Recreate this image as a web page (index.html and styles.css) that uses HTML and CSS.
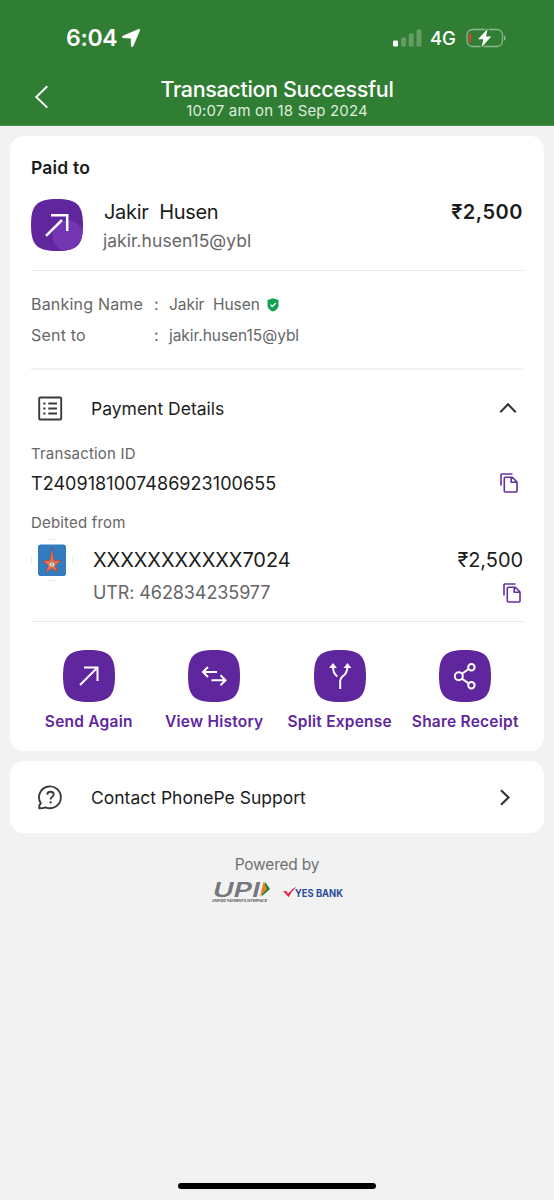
FILE: index.html
```
<!DOCTYPE html>
<html lang="en">
<head>
    <meta charset="UTF-8">
    <meta name="viewport" content="width=device-width, initial-scale=1">
    <title>Transaction Successful</title>
    <link rel="stylesheet" href="styles.css">
</head>
<body>
<svg width="0" height="0" class="defs">
    <symbol id="copy" viewBox="0 0 18 20">
        <path d="M1 12.5V1.8Q1 1 1.8 1H12.5M12.3 4.2H5.2Q4.3 4.2 4.3 5.1V18.1Q4.3 19 5.2 19H16.1Q17 19 17 18.1V9ZM11.2 4.5V9.2H16.8" fill="none" stroke="currentColor" stroke-width="1.6" stroke-linejoin="round"/>
    </symbol>
</svg>
<header class="header">
    <div class="status-bar">
        <span class="time">6:04</span>
        <svg class="location" width="18" height="18" viewBox="0 0 18 18"><path d="M16.6.4Q18 0 17.6 1.4L11 17Q10 18.600 9.400 17L9.200 9.700Q9.100 9 8.300 9L1 8.700Q-.600 8 1 7.100Z" fill="#fff" stroke="#fff" stroke-width=".8"/></svg>
        <svg class="signal" width="29" height="18" viewBox="0 0 29 18" fill="#fff"><rect y="11.500" width="5" height="6" rx="1.300"/><g opacity=".25"><rect x="8" y="8.500" width="5" height="9" rx="1.300"/><rect x="15.700" y="4.500" width="5" height="13" rx="1.300"/><rect x="23.500" y=".5" width="5" height="17" rx="1.300"/></g></svg>
        <span class="network">4G</span>
        <svg class="battery" width="40" height="20" viewBox="0 0 40 20">
            <rect x="1" y="1.500" width="35.500" height="17" rx="5.500" fill="none" stroke="#8bb98d" stroke-width="1.300"/>
            <path d="M38 7.300Q39.700 8 39.700 10T38 12.700Z" fill="#8bb98d"/>
            <rect x="3" y="5.500" width="2.300" height="9" rx="1" fill="#e5402f"/>
            <path d="M21.700.8 12 11.300H17.300L15.500 19.300 25.300 8.500H20Z" fill="#fff" stroke="#307e33" stroke-width="2" paint-order="stroke" stroke-linejoin="round"/>
        </svg>
    </div>
    <div class="title-bar">
        <svg class="back" width="16" height="24" viewBox="0 0 16 24"><path d="M14.300 1.200 3.200 12 14.300 22.600" fill="none" stroke="#fff" stroke-width="1.900"/></svg>
        <div class="titles">
            <h1>Transaction Successful</h1>
            <p>10:07 am on 18 Sep 2024</p>
        </div>
    </div>
</header>

<main>
    <section class="card receipt">
        <h2>Paid to</h2>
        <div class="payee">
            <svg width="52" height="52" viewBox="0 0 52 52">
                <clipPath id="tile"><path d="M26 0C46 0 52 6 52 26S46 52 26 52 0 46 0 26 6 0 26 0Z"/></clipPath>
                <g clip-path="url(#tile)"><rect width="52" height="52" fill="#60269e"/><circle cx="37" cy="37" r="15.500" fill="#7435b2"/></g>
                <path d="M20 16.300H36.200V32" fill="none" stroke="#fff" stroke-width="2.500"/>
                <path d="M15 36.800 31 21" stroke="#fff" stroke-width="2.500"/>
            </svg>
            <div class="payee-info">
                <span class="name">Jakir&nbsp; Husen</span>
                <span class="vpa">jakir.husen15@ybl</span>
            </div>
            <strong class="amount">₹2,500</strong>
        </div>
        <div class="banking">
            <div class="banking-row"><span class="key">Banking Name</span><span class="colon">:</span><span class="value">Jakir&nbsp; Husen</span>
                <svg class="verified" width="12" height="14" viewBox="0 0 12 14"><path d="M6 .3 11.500 2V7.500Q11.200 11.500 6 13.600Q.8 11.500.5 7.500V2Z" fill="#12a150"/><path d="M3.500 6.800 5.300 8.500 8.700 5" fill="none" stroke="#fff" stroke-width="1.300"/></svg>
            </div>
            <div class="banking-row"><span class="key">Sent to</span><span class="colon">:</span><span class="value">jakir.husen15@ybl</span></div>
        </div>
        <div class="details-head">
            <svg class="row-icon" width="25" height="25" viewBox="0 0 25 25" fill="none" stroke="#3a3a3a" stroke-width="1.900"><rect x="1.200" y="1.500" width="22" height="22" rx="1"/><path d="M5.300 7.500H7.500M10.300 7.500H19M5.300 12.500H7.500M10.300 12.500H19M5.300 17.500H7.500M10.300 17.500H19"/></svg>
            <span class="details-title">Payment Details</span>
            <svg width="18" height="12" viewBox="0 0 18 12"><path d="M1.300 10.200 9 2.300 16.700 10.200" fill="none" stroke="#333" stroke-width="2"/></svg>
        </div>
        <div class="label">Transaction ID</div>
        <div class="txn">
            <span>T2409181007486923100655</span>
            <svg class="copy" width="18" height="20"><use href="#copy"/></svg>
        </div>
        <div class="label debited">Debited from</div>
        <div class="account">
            <svg class="bank" width="42" height="42" viewBox="0 0 42 42">
                <g fill="none" stroke="#e6e6e6" stroke-width=".9"><path d="M17 .8Q21 .2 25 .8M17 41.200Q21 41.800 25 41.200M.8 17Q.2 21 .8 25M41.200 17Q41.800 21 41.200 25"/></g>
                <rect x="7" y="5.500" width="28" height="31.500" rx="2.800" fill="#347cc0"/>
                <path d="M20.900 8 23 21.300 30.700 21.500 24.300 26.400 27 34 20.700 29.500 14.600 34 17 26.400 11.200 21.500 18.800 21.300Z" fill="#ef6b42" stroke="#69496d" stroke-width=".6"/>
                <circle cx="20.900" cy="25.500" r="2.600" fill="#f5eee3" stroke="#666" stroke-width=".5"/><path d="M20.900 24V27" stroke="#444" stroke-width=".8"/>
            </svg>
            <div class="account-info">
                <div class="line"><span class="number">XXXXXXXXXXX7024</span><span class="debit">₹2,500</span></div>
                <div class="line"><span class="utr">UTR: 462834235977</span><svg class="copy" width="18" height="20"><use href="#copy"/></svg></div>
            </div>
        </div>
        <div class="actions">
            <div class="action">
                <svg width="52" height="52" viewBox="0 0 52 52"><path class="tile" d="M26 0C46 0 52 6 52 26S46 52 26 52 0 46 0 26 6 0 26 0Z"/><path class="stroke" d="M21 17.500H34.500V31M34.500 17.500 17 35"/></svg>
                <span>Send Again</span>
            </div>
            <div class="action">
                <svg width="52" height="52" viewBox="0 0 52 52"><path class="tile" d="M26 0C46 0 52 6 52 26S46 52 26 52 0 46 0 26 6 0 26 0Z"/><path class="stroke" d="M29 22H15.500M20 17 15 22 20 27M23.500 30.200H37M32.500 25.200 37.500 30.200 32.500 35.200"/></svg>
                <span>View History</span>
            </div>
            <div class="action">
                <svg width="52" height="52" viewBox="0 0 52 52"><path class="tile" d="M26 0C46 0 52 6 52 26S46 52 26 52 0 46 0 26 6 0 26 0Z"/><path class="stroke" d="M26.200 39V31Q26.200 28.500 28.500 26.500 33.300 23.500 33.500 16.500M19 16.500Q19 23.500 23.300 26.500"/><path fill="#fff" d="M15.100 17.900 19 13 22.900 17.900ZM29.600 17.900 33.500 13 37.400 17.900Z"/></svg>
                <span>Split Expense</span>
            </div>
            <div class="action">
                <svg width="52" height="52" viewBox="0 0 52 52"><path class="tile" d="M26 0C46 0 52 6 52 26S46 52 26 52 0 46 0 26 6 0 26 0Z"/><g class="stroke"><circle cx="19.800" cy="26.200" r="4"/><circle cx="32.400" cy="17.200" r="3.200"/><circle cx="32.400" cy="35.200" r="3.200"/><path d="M23 23.700 29.700 19M23 28.700 29.700 33.400"/></g></svg>
                <span>Share Receipt</span>
            </div>
        </div>
    </section>

    <section class="card support">
        <svg class="row-icon" width="25" height="25" viewBox="0 0 25 25" fill="none" stroke="#3a3a3a" stroke-width="1.900"><path d="M1.300 23.200V20.500L2.800 18.300A10.900 10.900 0 1 1 7.500 22.300Q5 23.300 1.300 23.200Z"/><path d="M9.300 9.800Q9.300 6.700 12.500 6.700T15.700 9.500Q15.700 11 14 12 12.600 12.900 12.600 14.600M12.600 16.300V18.400"/></svg>
        <span class="support-title">Contact PhonePe Support</span>
        <svg width="12" height="18" viewBox="0 0 12 18"><path d="M2 2.200 9.500 9.500 2 16.800" fill="none" stroke="#333" stroke-width="2.200"/></svg>
    </section>
</main>

<footer class="footer">
    <div class="powered">Powered by</div>
    <div class="partners">
        <svg class="upi-logo" width="60" height="24" viewBox="0 0 60 24">
            <text transform="translate(.5 15.500) skewX(-14)" class="upi" textLength="47" lengthAdjust="spacingAndGlyphs">UPI</text>
            <path d="M54 .8 59 8 50.500 15.500Z" fill="#17843c"/>
            <path d="M52.500 .8 56 8 49 15.500Z" fill="#f07c25"/>
            <text x="1" y="21.300" class="upi-sub" textLength="55" lengthAdjust="spacingAndGlyphs">UNIFIED PAYMENTS INTERFACE</text>
        </svg>
        <svg class="yes-logo" width="60" height="16" viewBox="0 0 60 16">
            <path d="M0 6.300 3.300 6Q4.200 7.700 5 8.800 8.500 3.800 13.800 1.500 8.200 6.500 5.500 12.300 3.500 9.300 0 6.300Z" fill="#e2233f"/>
            <text x="12" y="12" class="yes" textLength="48" lengthAdjust="spacingAndGlyphs">YES BANK</text>
        </svg>
    </div>
</footer>
<div class="home-bar"></div>
</body>
</html>
```
FILE: styles.css
```
* { box-sizing: border-box; }
body { margin: 0; height: 1200px; display: flex; flex-direction: column; background: #f2f2f2; color: #1c1c1c; font-family: Inter, "Noto Sans", sans-serif; white-space: nowrap; overflow: hidden; }
h1, h2, p { margin: 0; font-weight: normal; }
svg { display: block; flex: none; }
.defs { position: absolute; }

.header { height: 126px; background: #307e33; color: #fff; border-bottom: 1px solid #4c8f4f; }
.status-bar { height: 75px; padding: 0 48px 0 66px; display: flex; align-items: center; }
.time { width: 51px; font-size: 23px; font-weight: 600; letter-spacing: -0.3px; }
.location { margin-left: 5px; }
.signal { margin-left: auto; }
.network { width: 26px; margin: 0 10px 0 8px; font-size: 18.5px; font-weight: 500; letter-spacing: -0.1px; }
.title-bar { display: grid; grid-template-columns: 60px 1fr 60px; align-items: center; }
.back { margin-left: 33px; }
.titles { text-align: center; }
h1 { font-size: 21.5px; line-height: 28px; font-weight: 500; letter-spacing: -0.35px; }
.titles p { font-size: 15px; line-height: 16px; letter-spacing: 0.15px; color: #dfecdf; }

main { padding: 10px 10px 0; display: flex; flex-direction: column; gap: 10px; }
.card { background: #fff; border-radius: 14px; padding: 0 21px; }
.receipt { height: 615px; }
h2 { padding-top: 21px; font-size: 17.5px; line-height: 21px; font-weight: 600; letter-spacing: 0.2px; }
.payee { height: 93px; padding-top: 21px; display: flex; border-bottom: 1px solid #e8e8e8; }
.payee-info { flex: 1; margin-left: 21px; display: flex; flex-direction: column; }
.name { font-size: 20px; line-height: 26px; letter-spacing: -0.3px; }
.vpa { margin-left: -1px; font-size: 17.5px; line-height: 31px; letter-spacing: 0.03px; color: #666; }
.amount { font-size: 20px; line-height: 26px; font-weight: 600; letter-spacing: 0.5px; }
.banking { height: 99px; padding-top: 18px; border-bottom: 2px solid #f0f0f0; color: #666; }
.banking-row { height: 31px; display: flex; align-items: baseline; line-height: 31px; font-size: 16px; }
.banking-row + .banking-row { height: 30px; line-height: 30px; }
.key { width: 123px; letter-spacing: 0.2px; }
.colon { width: 15px; }
.value { font-size: 15.5px; letter-spacing: -0.05px; }
.verified { align-self: center; margin-left: 7px; }
.details-head { height: 74px; padding-top: 2px; display: flex; align-items: center; }
.row-icon { margin: 0 28px 0 7px; }
.details-title, .support-title { flex: 1; font-size: 17.5px; }
.details-head svg:last-child { margin-right: 6px; }
.label { font-size: 15px; line-height: 20px; letter-spacing: 0.18px; color: #666; }
.debited { margin-top: 10px; }
.txn { height: 39px; display: flex; align-items: center; justify-content: space-between; font-size: 18px; letter-spacing: 0.05px; }
.copy { color: #6230a1; }
.txn .copy { margin-right: 5px; margin-top: -1px; }
.account { height: 89px; display: flex; border-bottom: 1px solid #e8e8e8; }
.bank { margin: 6px 20px 0 0; }
.account-info { flex: 1; padding-top: 10px; }
.line { height: 33px; display: flex; align-items: center; justify-content: space-between; font-size: 20px; letter-spacing: -0.06px; }
.line .copy { margin-right: 2px; }
.line .utr { font-size: 18px; letter-spacing: -0.1px; color: #666; }
.actions { padding-top: 28px; margin: 0 -5px; display: grid; grid-template-columns: repeat(4, 1fr); }
.action { display: flex; flex-direction: column; align-items: center; color: #60269e; font-size: 15.5px; line-height: 40px; font-weight: 600; letter-spacing: 0.23px; }
.tile { fill: #60269e; }
.stroke { fill: none; stroke: #fff; stroke-width: 2; }
.support { height: 72px; display: flex; align-items: center; }
.support svg:last-child { margin-right: 12px; }

.footer { padding-top: 20px; display: flex; flex-direction: column; align-items: center; }
.powered { font-size: 15.5px; line-height: 24px; letter-spacing: -0.2px; color: #707070; }
.partners { margin-top: 4px; display: flex; align-items: center; gap: 12px; }
.upi-logo, .yes-logo { overflow: visible; }
.upi { font: 600 20.500px Inter, sans-serif; fill: #77787b; }
.upi-sub { font: italic 700 4.300px "Liberation Sans", sans-serif; fill: #555; }
.yes { font: 700 10px Inter, sans-serif; fill: #2b4b9b; }
.home-bar { width: 198px; height: 6px; margin: auto auto 11px; border-radius: 3px; background: #000; }
```
